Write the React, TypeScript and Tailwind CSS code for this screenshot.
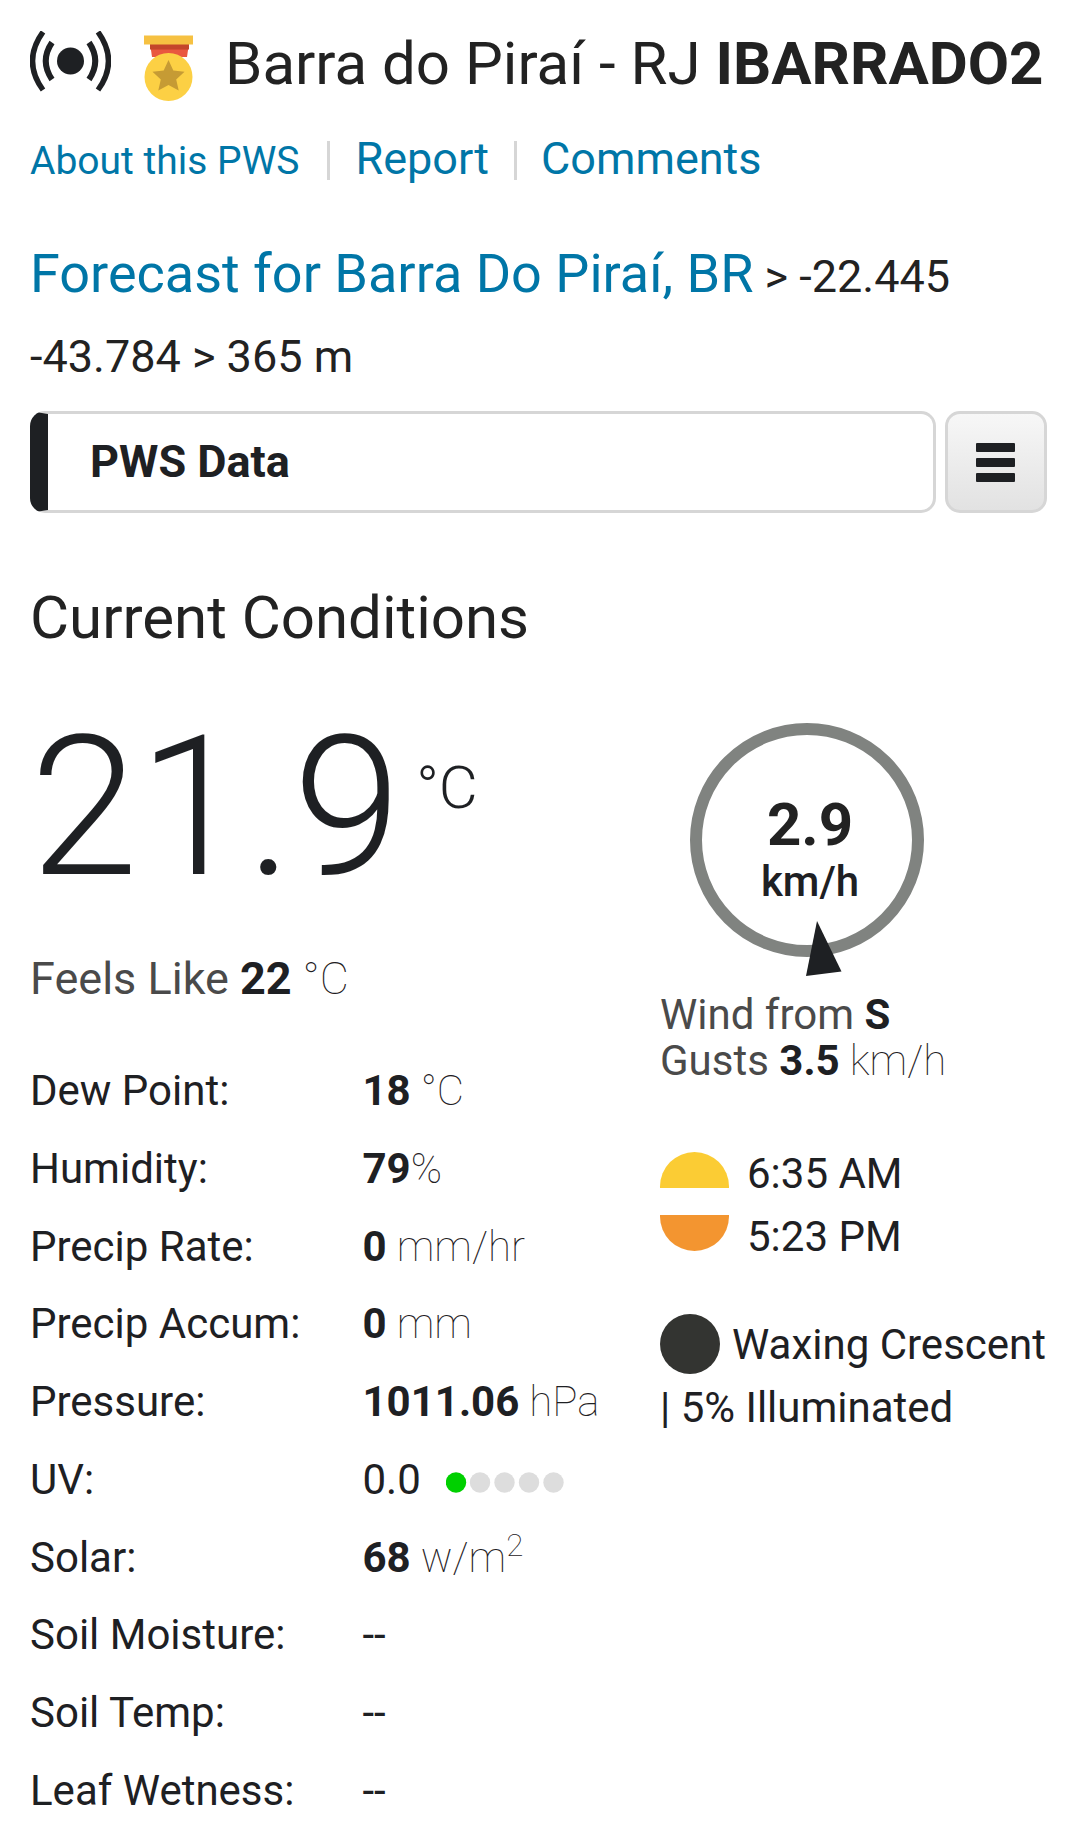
import type { ReactNode } from "react";

const READINGS: { label: string; value?: string; unit?: ReactNode }[] = [
  { label: "Dew Point:", value: "18", unit: " °C" },
  { label: "Humidity:", value: "79", unit: "%" },
  { label: "Precip Rate:", value: "0", unit: " mm/hr" },
  { label: "Precip Accum:", value: "0", unit: " mm" },
  { label: "Pressure:", value: "1011.06", unit: " hPa" },
  { label: "UV:" },
  {
    label: "Solar:",
    value: "68",
    unit: (
      <>
        {" w/m"}
        <sup className="text-[31.5px]">2</sup>
      </>
    ),
  },
  { label: "Soil Moisture:" },
  { label: "Soil Temp:" },
  { label: "Leaf Wetness:" },
];

function BroadcastIcon() {
  return (
    <svg className="h-[61px] w-[81px] shrink-0" viewBox="0 0 81 61" fill="none" stroke="#1e2023">
      <circle cx="40.5" cy="30" r="13.5" fill="#1e2023" stroke="none" />
      <path d="M22 11.5Q9.500 30 22 48.500M59 11.5Q71.500 30 59 48.500" strokeWidth="6" />
      <path d="M13 1Q-8 30 13 59M68 1Q89 30 68 59" strokeWidth="5.5" />
    </svg>
  );
}

function MedalIcon() {
  return (
    <svg className="h-[66px] w-[50px] shrink-0" viewBox="0 0 50 66">
      <path d="M6 8h39l-2 14H8z" fill="#e9573f" />
      <path d="M6 8h39v6.500H6z" fill="#c4452b" />
      <path d="M0 0.500h49v9H0z" fill="#f6c142" />
      <circle cx="24.5" cy="42" r="24" fill="#fcd044" />
      <path
        d="M24.500 25l4.800 10.600 11.200 1.200-8.300 7.700 2.500 11-10.200-5.500L14.300 55.500l2.500-11L8.500 36.800l11.200-1.200z"
        fill="#c69b34"
      />
    </svg>
  );
}

function UvDots() {
  return (
    <svg className="ml-[25.5px] h-[21px] w-[118px]" viewBox="0 0 118 21">
      {[10, 34, 58.5, 83, 107.5].map((cx, i) => (
        <circle key={cx} cx={cx} cy="10.5" r="10.2" fill={i === 0 ? "#00d000" : "#dddddd"} />
      ))}
    </svg>
  );
}

function WindDial() {
  return (
    <div className="relative ml-[30px] mt-[23px] flex size-[234px] flex-col items-center rounded-full border-[12px] border-[#808380] pt-[61px] pl-1.5">
      <div className="text-[60px] font-bold leading-[57px] text-[#222]">2.9</div>
      <div className="text-[42px] font-medium leading-[58px]">km/h</div>
      {/* points to where the wind comes from */}
      <svg className="absolute left-[104px] top-[186px] h-[55px] w-[36px]" viewBox="0 0 36 55">
        <path d="M11 0L35.5 50.5 0 55z" fill="#1e2023" />
      </svg>
    </div>
  );
}

export default function App() {
  return (
    <div className="h-[1844px] w-[1080px] overflow-hidden bg-white pl-[30px] font-[Roboto,sans-serif] text-[42px] text-[#1e2023]">
      <header className="flex h-[132px] items-start pt-[25px]">
        <div className="pt-1.5">
          <BroadcastIcon />
        </div>
        <div className="ml-[33px] pt-2.5">
          <MedalIcon />
        </div>
        <h1 className="ml-[31px] whitespace-nowrap text-[60px] leading-[77px] text-[#222]">
          Barra do Piraí - RJ <b>IBARRADO2</b>
        </h1>
      </header>

      <nav className="flex h-[54px] items-baseline text-[45px] leading-[54px] text-[#0076a7]">
        <a className="text-[39px]">About this PWS</a>
        <span className="ml-7 h-[39px] w-[3px] translate-y-[9px] self-start bg-[#d6d6d6]" />
        <a className="ml-[25px]">Report</a>
        <span className="ml-[25px] h-[39px] w-[3px] translate-y-[9px] self-start bg-[#d6d6d6]" />
        <a className="ml-6">Comments</a>
      </nav>

      <p className="mt-[48px] h-[177px] w-[1020px] text-[45px] leading-[80px] text-[#222]">
        <a className="text-[54px] text-[#0076a7]">Forecast for Barra Do Piraí, BR</a> &gt; -22.445
        <br />
        -43.784 &gt; 365 m
      </p>

      <div className="flex h-[102px] gap-[9px]">
        <div className="flex w-[906px] items-center rounded-[15px] border-[3px] border-l-[18px] border-[#d6d6d6] border-l-[#1e2023] pl-[42px] text-[45px] font-bold leading-[96px]">
          PWS Data
        </div>
        <button className="flex w-[102px] flex-col items-center justify-center gap-1.5 rounded-[15px] border-[3px] border-[#d6d6d6] bg-linear-to-b from-[#f7f7f7] to-[#e2e2e2] pr-px">
          <span className="h-[9px] w-[39px] rounded-[1px] bg-[#1e2023]" />
          <span className="h-[9px] w-[39px] rounded-[1px] bg-[#1e2023]" />
          <span className="h-[9px] w-[39px] rounded-[1px] bg-[#1e2023]" />
        </button>
      </div>

      <h2 className="mt-[67px] h-[120px] text-[60px] leading-[76px] text-[#222]">Current Conditions</h2>

      <div className="grid grid-cols-[630px_420px]">
        <section>
          <div className="flex h-[252px] pt-2">
            <div className="text-[195px] font-light leading-[200px]">21.9</div>
            <div className="ml-[15px] mt-[50px] text-[60px] font-light leading-[60px]">°C</div>
          </div>
          <div className="h-[100px] text-[45px] leading-[54px] text-[#4a4a4a]">
            Feels Like <b className="text-[#1e2023]">22</b>
            <span className="font-thin text-[#1e2023]"> °C</span>
          </div>
          {READINGS.map(({ label, value, unit }) => (
            <div
              key={label}
              className="grid h-[77.75px] grid-cols-[332.5px_1fr] whitespace-nowrap leading-[77.75px]"
            >
              <div>{label}</div>
              {label === "UV:" ? (
                <div className="flex">
                  0.0
                  <div className="flex items-center pt-1.5">
                    <UvDots />
                  </div>
                </div>
              ) : value ? (
                <div>
                  <b>{value}</b>
                  <span className="font-thin">{unit}</span>
                </div>
              ) : (
                <div>--</div>
              )}
            </div>
          ))}
        </section>

        <section className="whitespace-nowrap">
          <WindDial />
          <div className="mt-[35px] leading-[46px] text-[#4a4a4a]">
            <div>
              Wind from <b className="text-[#1e2023]">S</b>
            </div>
            <div>
              Gusts <b className="text-[#1e2023]">3.5</b>
              <span className="font-thin text-[#1e2023]"> km/h</span>
            </div>
          </div>

          <div className="mt-[58px] flex h-[63px] leading-[63px]">
            <span className="mt-[10px] h-9 w-[69px] rounded-t-full bg-[#fbcc34]" />
            <span className="ml-[18px]">6:35 AM</span>
          </div>
          <div className="flex h-[63px] leading-[63px]">
            <span className="mt-[10px] h-9 w-[69px] rounded-b-full bg-[#f39530]" />
            <span className="ml-[18px]">5:23 PM</span>
          </div>

          <div className="mt-[45px] flex h-[63px] leading-[63px]">
            <span className="mt-px size-[60px] rounded-full bg-[#333431]" />
            <span className="ml-3">Waxing Crescent</span>
          </div>
          <div className="leading-[63px]">| 5% Illuminated</div>
        </section>
      </div>
    </div>
  );
}
